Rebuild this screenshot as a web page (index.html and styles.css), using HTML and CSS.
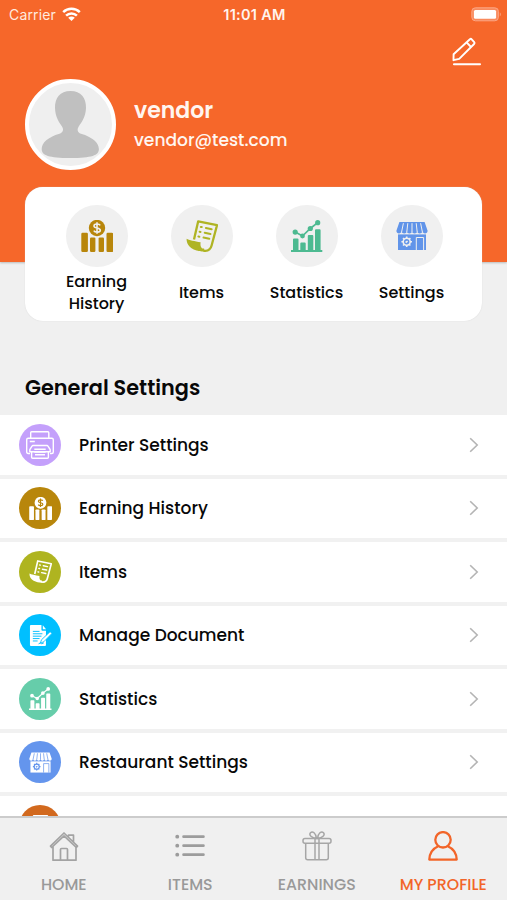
FILE: index.html
```html
<!DOCTYPE html>
<html lang="en">
<head>
<meta charset="utf-8">
<meta name="viewport" content="width=device-width, initial-scale=1">
<title>My Profile</title>
<link rel="stylesheet" href="styles.css">
</head>
<body>
<svg class="sprite" width="0" height="0">
  <symbol id="earning" viewBox="0 0 32 32">
    <g fill="currentColor"><circle cx="16" cy="8" r="8.2"/><rect x=".3" y="12.7" width="6.6" height="19.3" rx="1.2"/><rect x="9" y="17.4" width="5.4" height="14.6" rx="1.2"/><rect x="17.6" y="17.4" width="5.4" height="14.6" rx="1.2"/><rect x="25.5" y="12.7" width="6.6" height="19.3" rx="1.2"/></g>
    <path class="cut" d="M19.2 5.3C18.3 3.7 13 3.4 13 6c0 2.7 6.3 1.4 6.3 4.2 0 2.5-5.4 2.5-6.5.4M16 2.2v11.6"/>
  </symbol>
  <symbol id="scroll" viewBox="0 0 32 32">
    <path fill="none" stroke="currentColor" stroke-width="2.3" stroke-linejoin="round" d="M8 19.5 12.2 1.3 31 5.2 25.6 25.5C24.6 29.4 21.7 31.4 17.4 30.6"/>
    <path fill="currentColor" d="M.6 18.8c2.2 1.1 8.3 2.8 14 3.4-.6 4.2.8 6.8 3.5 6.3v3C12.2 31.8.3 29 .6 18.8Z"/>
    <path fill="none" stroke="currentColor" stroke-width="2" stroke-linecap="round" d="m14.8 6.9 1 .2m4.1.9 5.800 1.200M13.600 11.700l1 .2m4.100.9 5.800 1.200M12.400 16.500l1 .2m4.100.9 5.800 1.200"/>
  </symbol>
  <symbol id="stats" viewBox="0 0 32 32">
    <g fill="currentColor"><path d="M0 30h31.3v2H0ZM2 19.600q0-1 1-1h3.500q1 0 1 1V30H2ZM9.300 23.600q0-1 1-1h3.400q1 0 1 1V30H9.300ZM16.800 16q0-1 1-1h3.500q1 0 1 1v14h-5.500ZM24 10.200q0-1 1-1h3.600q1 0 1 1V30H24Z"/><circle cx="4.200" cy="12.100" r="2.600"/><circle cx="11.500" cy="16" r="2.400"/><circle cx="19.300" cy="8.500" r="2.600"/><circle cx="26.700" cy="2.700" r="2.600"/></g>
    <path fill="none" stroke="currentColor" stroke-width="1.700" d="m4.200 12.100 7.300 3.900 7.800-7.500 7.400-5.800"/>
  </symbol>
  <symbol id="shop" viewBox="0 0 32 32">
    <g fill="currentColor"><path d="M3.400 2h25.200l3 8.800c0 3.400-4.700 3.400-5.200.5-.5 2.900-4.800 2.900-5.200 0-.4 2.900-4.800 2.900-5.200 0-.4 2.900-4.800 2.900-5.200 0-.4 2.900-4.800 2.900-5.200 0C5.100 14.200.4 14.200.4 10.800Z"/><path d="M2 14.400h28V30H2Z"/></g>
    <path class="cut thin" d="M7.400 3.200 5.600 12M11.800 3.200l-1 8.800M16 3.200V12m4.200-8.800 1 8.800m3.400-8.800 1.800 8.800M20.300 30V17.500h7.300V30"/>
    <circle class="cut" cx="10.700" cy="21.800" r="3.500"/>
    <path class="cut" d="M10.700 16.500v2M10.700 25.100v2M5.400 21.800h2M14 21.800h2M7 18.100l1.300 1.300M13.100 24.200l1.300 1.300M14.400 18.100l-1.300 1.300M8.300 24.200 7 25.500M9.600 22.500l2-1.400"/>
  </symbol>
  <symbol id="printer" viewBox="0 0 28 28">
    <g fill="none" stroke="currentColor" stroke-width="1.400" stroke-linejoin="round"><path d="M4.700 7.200V1.700q0-.9.900-.9h16.300q.9 0 .9.900v5.500M4 22.500H2.200q-1.500 0-1.500-1.500V8.700q0-1.500 1.500-1.500h23.600q1.500 0 1.500 1.500V21q0 1.500-1.500 1.500H24"/><path d="M7 14.500h14q.7 0 1 .6l2.200 3.600v2H3.800v-2L6 15.100q.3-.6 1-.6ZM5.600 20.700v5.500q0 1 1 1h14.800q1 0 1-1v-5.500"/><path d="M8.300 18.200h11.400M8.300 21h11.400M9 23.800h10M3.800 10.500h5"/></g>
  </symbol>
  <symbol id="document" viewBox="0 0 24 24">
    <path fill="currentColor" d="M2 1h11v5q0 1 1 1h3.700v15q0 1-1 1H2q-1 0-1-1V2q0-1 1-1ZM14.400 1.400l3.400 4.100h-3.400Z"/>
    <path fill="none" stroke="#00bfff" stroke-width="1" d="M4 7.700h7M4 10.200h10M4 12.700h9M4 15.200h7M4 17.700h5M10 20.700l2-1 1 1 2.500-1"/>
    <path fill="currentColor" stroke="#00bfff" stroke-width=".9" d="m22 8 2 1.800-8.500 8.700-3.700 1.500 1.300-3.600Z"/>
  </symbol>
  <symbol id="chevron" viewBox="0 0 10 16"><path fill="none" stroke="#b4b4b4" stroke-width="1.600" d="m1.200 1.200 7 6.800-7 6.800"/></symbol>
</svg>

<div class="screen">
  <header class="header">
    <div class="status">
      <div class="carrier"><span>Carrier</span>
        <svg width="19" height="14" viewBox="0 0 19 14"><g fill="none" stroke="#fff" stroke-width="2.500"><path d="M1.200 5.100c4.600-4.400 12-4.400 16.600 0M4.100 8.600c3-2.900 7.800-2.900 10.800 0"/></g><path fill="#fff" d="M6.200 10.700c1.800-1.700 4.800-1.700 6.600 0L9.500 14Z"/></svg>
      </div>
      <div class="clock">11:01 AM</div>
      <svg class="battery" width="31" height="15" viewBox="0 0 31 15"><rect x=".8" y=".8" width="26.600" height="13" rx="3.600" fill="#f98a5d" stroke="#fba584"/><rect x="2.900" y="3" width="22.200" height="8.800" rx="1.500" fill="#fff"/><path d="M28.800 5.200q2 2.100 0 4.200Z" fill="#fba584"/></svg>
    </div>
    <div class="actions">
      <svg width="30" height="30" viewBox="0 0 30 30"><g fill="none" stroke="#fff" stroke-width="1.900" stroke-linejoin="round"><path d="m1.600 17.200 16.300-15q1-.8 1.800.1l2.500 2.900q.8.900-.1 1.800L7.200 21.800 1.500 23.200Z"/><path d="m14.600 5.300 4.400 4.700"/><path stroke-width="2.100" stroke-linecap="round" d="M2 27.200h26"/></g></svg>
    </div>
    <div class="profile">
      <svg class="avatar" width="91" height="91" viewBox="0 0 91 91"><circle cx="45.500" cy="45.500" r="43.500" fill="#efefef" stroke="#fff" stroke-width="4"/><path fill="#c0c0c0" d="M45.500 12C35 12 29.700 19 30 29c.3 8.500 3.500 13.500 7 18.500 2 3.200 1 6-2.500 7.300C23 58 16.700 64 16.700 70c0 6.500 7 9 28.600 9s28.600-2.500 28.600-9c0-6-6.400-12-17.900-15.200-3.500-1.300-4.200-4.100-2.300-7.300 3.500-5 7-10 7.300-18.500C61.400 19 56 12 45.500 12Z"/></svg>
      <div class="who"><div class="name">vendor</div><div class="mail">vendor@test.com</div></div>
    </div>
  </header>

  <section class="card">
    <div class="tile c-gold"><div class="disc"><svg><use href="#earning"/></svg></div><p>Earning<br>History</p></div>
    <div class="tile c-lime"><div class="disc"><svg><use href="#scroll"/></svg></div><p>Items</p></div>
    <div class="tile c-green"><div class="disc"><svg><use href="#stats"/></svg></div><p>Statistics</p></div>
    <div class="tile c-blue"><div class="disc"><svg><use href="#shop"/></svg></div><p>Settings</p></div>
  </section>

  <h2>General Settings</h2>

  <ul class="list">
    <li><div class="dot b-purple"><svg class="big"><use href="#printer"/></svg></div><span class="label">Printer Settings</span><svg class="chev"><use href="#chevron"/></svg></li>
    <li><div class="dot b-gold"><svg><use href="#earning"/></svg></div><span class="label">Earning History</span><svg class="chev"><use href="#chevron"/></svg></li>
    <li><div class="dot b-lime"><svg><use href="#scroll"/></svg></div><span class="label">Items</span><svg class="chev"><use href="#chevron"/></svg></li>
    <li><div class="dot b-cyan"><svg><use href="#document"/></svg></div><span class="label">Manage Document</span><svg class="chev"><use href="#chevron"/></svg></li>
    <li><div class="dot b-green"><svg><use href="#stats"/></svg></div><span class="label">Statistics</span><svg class="chev"><use href="#chevron"/></svg></li>
    <li><div class="dot b-blue"><svg><use href="#shop"/></svg></div><span class="label">Restaurant Settings</span><svg class="chev"><use href="#chevron"/></svg></li>
    <li><div class="dot b-orange"><svg viewBox="0 0 24 24"><rect x="4" y="1" width="16" height="20" rx="1" fill="currentColor"/></svg></div></li>
  </ul>

  <nav class="tabs">
    <div class="tab"><svg width="30" height="32" viewBox="0 0 30 32"><g fill="none" stroke="#a3a3a3" stroke-width="1.700" stroke-linejoin="round"><path d="M4 15v14.200h23V15M1.500 15.200 15 2l13.500 13.200-1.200 1.300L15 4.800 2.700 16.500ZM19.500 5.500V4.200h5v7M11.500 29V18.500q0-1 1-1h5q1 0 1 1V29"/></g></svg><span>HOME</span></div>
    <div class="tab"><svg width="30" height="32" viewBox="0 0 30 32"><g stroke="#9c9c9c" stroke-width="2.800" stroke-linecap="round"><path d="M8.600 5.700h19.800M8.600 14.700h19.800M8.600 23.700h19.800"/><path stroke-width="3.800" d="M2.200 5.700h.1M2.200 14.700h.1M2.200 23.700h.1"/></g></svg><span>ITEMS</span></div>
    <div class="tab"><svg width="30" height="32" viewBox="0 0 30 32"><g fill="none" stroke="#a6a6a6" stroke-width="1.500"><rect x="1" y="7.500" width="28" height="4.800" rx="2"/><path d="M3.700 12.300v14.500q0 2 2 2h18.600q2 0 2-2V12.300M13 7.500v21.300M17 7.500v21.300M14.500 7.500C9.500 7 6.600 4 8.500 1.700c2-2 5.500.3 6 5.800ZM15.500 7.500C20.500 7 23.400 4 21.500 1.700c-2-2-5.500.3-6 5.800Z"/></g></svg><span>EARNINGS</span></div>
    <div class="tab active"><svg width="30" height="32" viewBox="0 0 30 32"><g fill="none" stroke="#f26529" stroke-width="2.300" stroke-linejoin="round"><circle cx="15" cy="8.800" r="7.700"/><path d="M10.200 15.200C5 17.500 1.500 22 1.300 28.600h27.400C28.500 22 25 17.500 19.800 15.200"/></g></svg><span>MY PROFILE</span></div>
  </nav>
</div>
</body>
</html>
```

FILE: styles.css
```css
* { box-sizing: border-box; }
body { margin: 0; font-family: Poppins, Inter, sans-serif; font-weight: 500; color: #080808; background: #f0f0f0; }
.sprite { display: block; height: 0; }
.screen { height: 900px; overflow: hidden; display: flex; flex-direction: column; position: relative; }
.header { height: 262px; flex: none; background: #f6672a; color: #fff; box-shadow: 0 1px 2px #bbb; }

.status { height: 28px; display: grid; grid-template-columns: 1fr auto 1fr; align-items: center; padding: 0 7px 0 9px; font-family: Inter, sans-serif; }
.carrier { display: flex; align-items: center; gap: 6px; font-weight: 400; font-size: 14px; letter-spacing: .15px; color: #ffeadf; }
.clock { font-weight: 600; letter-spacing: .3px; font-size: 14.500px; color: #fff4ee; }
.battery { justify-self: end; margin-right: -2px; }
.actions { display: flex; justify-content: flex-end; padding: 9px 25px 0 0; height: 51px; }
.profile { display: flex; align-items: center; gap: 18px; padding-left: 25px; }
.avatar { flex: none; }
.who { padding-top: 1px; }
.name { font-size: 22px; font-weight: 600; line-height: 30px; color: #fff6f0; }
.mail { font-size: 17.100px; line-height: 28px; color: #fff6f0; }

.card { flex: none; position: relative; margin: -75px 25px 0; height: 134px; background: #fff; border-radius: 18px; padding: 18px 18px 0 19px; display: grid; grid-template-columns: repeat(4, 1fr); box-shadow: 0 0 1px #ccc; }
.tile { display: flex; flex-direction: column; align-items: center; }
.disc { width: 62px; height: 62px; border-radius: 50%; background: #f0f0f0; display: grid; place-items: center; --cut: #f0f0f0; }
.disc svg { width: 32px; height: 32px; }
.tile p { margin: 4px 0 0; height: 44px; display: flow-root; align-content: center; text-align: center; font-size: 16px; line-height: 22px; color: #080808; }
.cut { fill: none; stroke: var(--cut); stroke-width: 1.600; }
.thin { stroke-width: 1; }
.c-gold { color: #b8860b; }
.c-lime { color: #afb424; }
.c-green { color: #4dba91; }
.c-blue { color: #6194e9; }

h2 { flex: none; margin: 51px 0 0 25px; height: 43px; line-height: 31px; font-size: 20.800px; font-weight: 600; }

.list { flex: none; list-style: none; margin: 0; padding: 0; }
.list li { height: 63.500px; border-bottom: 4px solid #f1f1f1; background: #fff; display: flex; align-items: center; padding: 0 28px 0 19px; }
.dot { width: 42px; height: 42px; border-radius: 50%; display: grid; place-items: center; color: #fff; --cut: var(--bg); background: var(--bg); }
.dot svg { width: 23px; height: 23px; }
.dot svg.big { width: 28px; height: 28px; }
.b-purple { --bg: #c4a0fb; }
.b-gold { --bg: #b8860b; }
.b-lime { --bg: #afb420; }
.b-cyan { --bg: #00bfff; }
.b-green { --bg: #66cdaa; }
.b-blue { --bg: #6495ed; }
.b-orange { --bg: #d2691e; }
.label { margin-left: 18px; flex: 1; font-size: 17.050px; }
.chev { width: 10px; height: 16px; }

.tabs { position: absolute; left: 0; right: 0; bottom: 0; height: 84px; background: #f0f0f0; border-top: 2px solid #ccc; display: grid; grid-template-columns: repeat(4, 126.500px); padding-left: .5px; }
.tab { display: flex; flex-direction: column; align-items: center; padding-top: 13px; color: #999; font-size: 15.800px; }
.tab span { margin-top: 12px; line-height: 20px; white-space: nowrap; }
.tab.active { color: #f26529; }
```
